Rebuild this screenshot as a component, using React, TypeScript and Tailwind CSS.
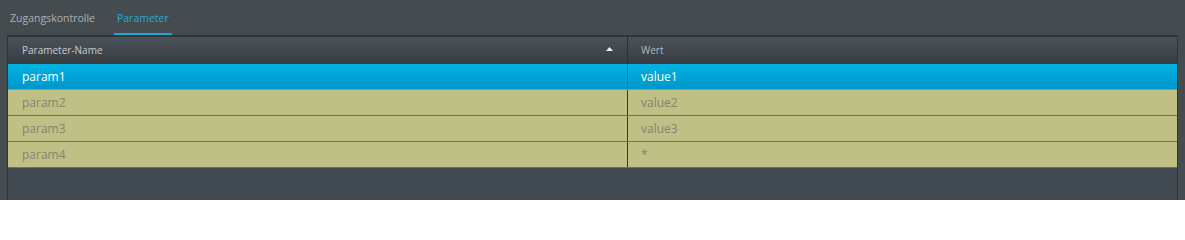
import React from 'react';

type Row = { name: string; value: string };

const rows: Row[] = [
  { name: 'param1', value: 'value1' },
  { name: 'param2', value: 'value2' },
  { name: 'param3', value: 'value3' },
  { name: 'param4', value: '*' },
];

const font = { fontFamily: '"Open Sans", "Liberation Sans", sans-serif' };

export default function App() {
  return (
    <div className="h-[200px] w-full overflow-hidden bg-[#454c50] pl-[7px] pr-[7px]" style={font}>
      <div className="flex h-[35px] items-stretch">
        <div className="flex items-center px-[3px] pt-[3px] text-[10.5px] text-[#a9b0b4]">Zugangskontrolle</div>
        <div className="ml-[16px] flex items-center border-b-2 border-[#1aa6d8] px-[3px] pt-[5px] text-[10.5px] text-[#2aa6dc]">
          Parameter
        </div>
      </div>
      <div className="h-[165px] border-l border-r border-t-2 border-[#2f3539] bg-[#404850]">
        <div className="flex h-[27px] bg-gradient-to-b from-[#4b535a] to-[#373c41] text-[10px] text-[#c9cccf]">
          <div className="flex w-[620px] items-center justify-between border-r border-[#2c3135] pl-[14px] pr-[14px]">
            <span>Parameter-Name</span>
            <svg width="7" height="4" viewBox="0 0 7 4" className="mb-[4px]">
              <path d="M0 4 L3.5 0 L7 4 Z" fill="#eef0f2" />
            </svg>
          </div>
          <div className="flex flex-1 items-center pl-[13px] text-[#b4b8bc]">Wert</div>
        </div>
        {rows.map((r, i) => {
          const sel = i === 0;
          return (
            <div
              key={r.name}
              className={
                sel
                  ? 'flex h-[26px] border-b border-[#7f9a8c] bg-gradient-to-b from-[#00b2e2] to-[#0097cb] text-[12px] text-white'
                  : 'flex h-[26px] border-b border-[#6d7164] bg-[#bfc086] text-[12px] text-[#84846c]'
              }
            >
              <div
                className={
                  sel
                    ? 'flex w-[620px] items-center border-r border-[#0b7fa8] pl-[14px]'
                    : 'flex w-[620px] items-center border-r border-[#2f3539] pl-[14px]'
                }
              >
                {r.name}
              </div>
              <div className="flex flex-1 items-center pl-[13px]">{r.value}</div>
            </div>
          );
        })}
      </div>
    </div>
  );
}
